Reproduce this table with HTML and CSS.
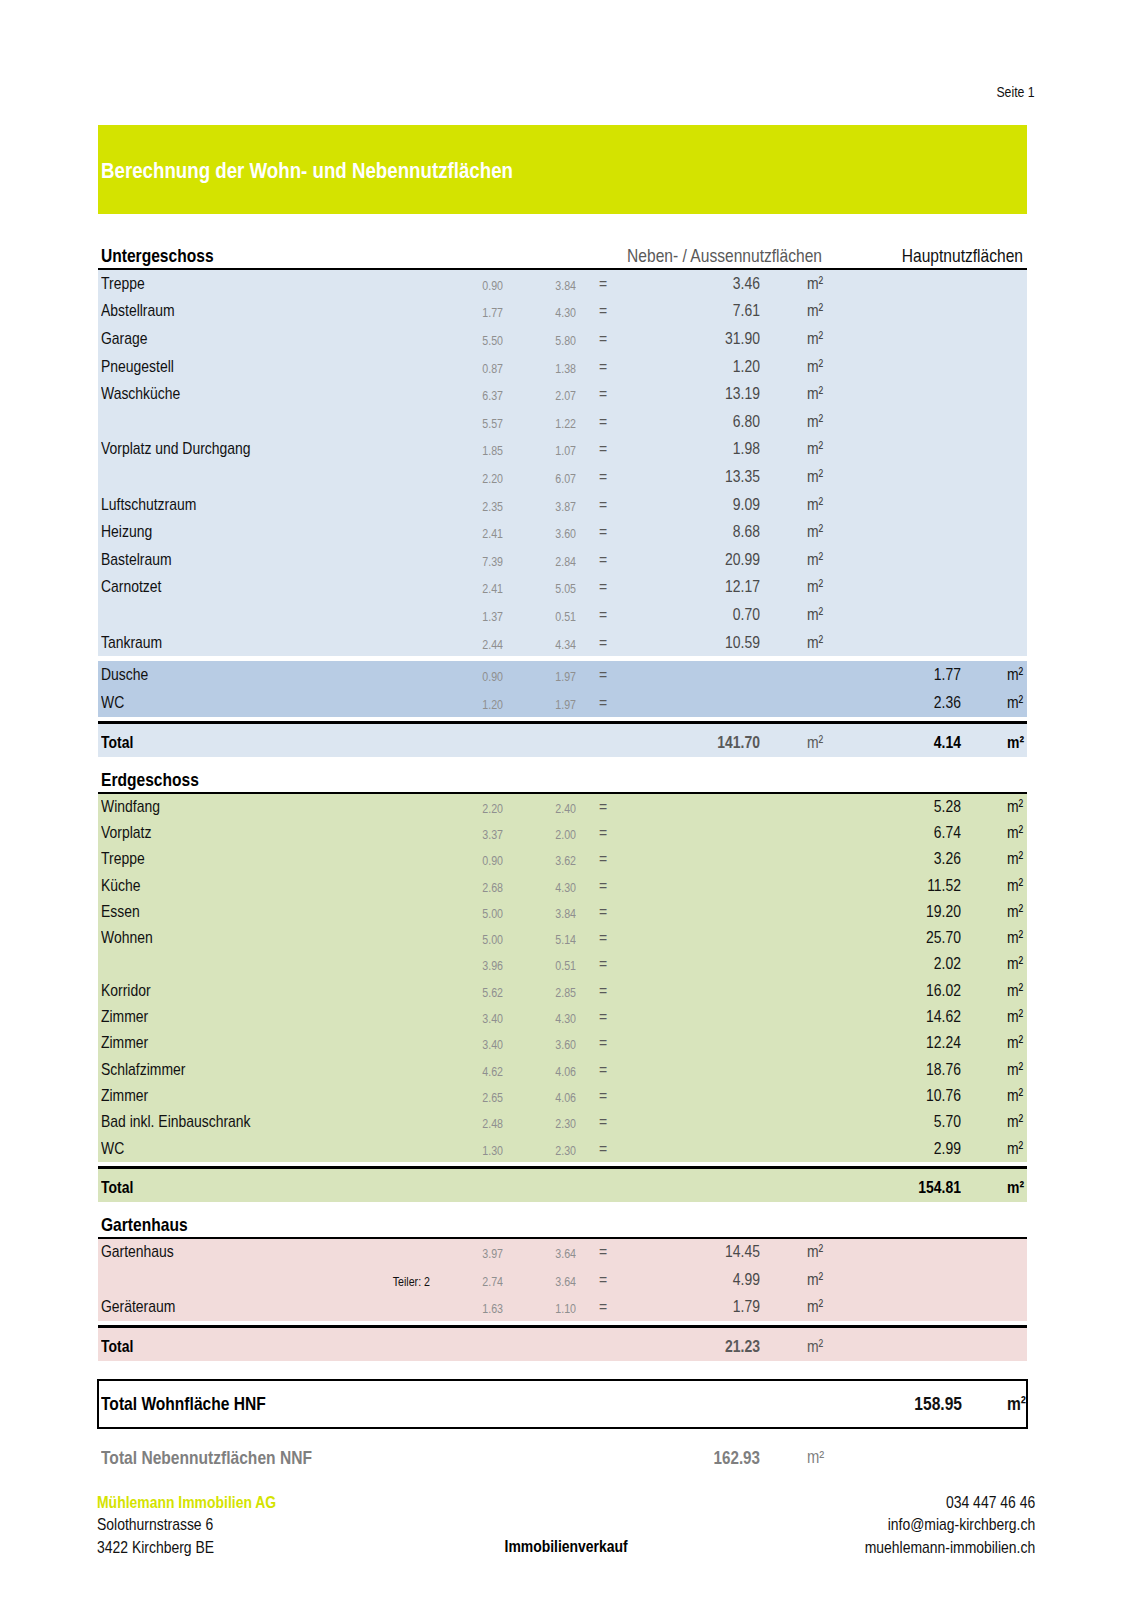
FILE: index.html
```html
<!DOCTYPE html>
<html lang="de">
<head>
<meta charset="utf-8">
<title>Berechnung der Wohn- und Nebennutzflächen</title>
<link rel="stylesheet" href="styles.css">
</head>
<body>
<div class="page">
  <div class="pageno"><span>Seite 1</span></div>

  <div class="banner"><h1>Berechnung der Wohn- und Nebennutzflächen</h1></div>

  <div class="sec-head first">
    <span class="sec-title">Untergeschoss</span>
    <span class="col-neben">Neben- / Aussennutzflächen</span>
    <span class="col-haupt">Hauptnutzflächen</span>
  </div>
  <div class="block blue">
    <div class="row"><span class="lbl">Treppe</span><span class="note"></span><span class="d">0.90</span><span class="d">3.84</span><span class="eq">=</span><span class="v">3.46</span><span class="u">m²</span><span class="v2"></span><span class="u2"></span></div>
    <div class="row"><span class="lbl">Abstellraum</span><span class="note"></span><span class="d">1.77</span><span class="d">4.30</span><span class="eq">=</span><span class="v">7.61</span><span class="u">m²</span><span class="v2"></span><span class="u2"></span></div>
    <div class="row"><span class="lbl">Garage</span><span class="note"></span><span class="d">5.50</span><span class="d">5.80</span><span class="eq">=</span><span class="v">31.90</span><span class="u">m²</span><span class="v2"></span><span class="u2"></span></div>
    <div class="row"><span class="lbl">Pneugestell</span><span class="note"></span><span class="d">0.87</span><span class="d">1.38</span><span class="eq">=</span><span class="v">1.20</span><span class="u">m²</span><span class="v2"></span><span class="u2"></span></div>
    <div class="row"><span class="lbl">Waschküche</span><span class="note"></span><span class="d">6.37</span><span class="d">2.07</span><span class="eq">=</span><span class="v">13.19</span><span class="u">m²</span><span class="v2"></span><span class="u2"></span></div>
    <div class="row"><span class="lbl"></span><span class="note"></span><span class="d">5.57</span><span class="d">1.22</span><span class="eq">=</span><span class="v">6.80</span><span class="u">m²</span><span class="v2"></span><span class="u2"></span></div>
    <div class="row"><span class="lbl">Vorplatz und Durchgang</span><span class="note"></span><span class="d">1.85</span><span class="d">1.07</span><span class="eq">=</span><span class="v">1.98</span><span class="u">m²</span><span class="v2"></span><span class="u2"></span></div>
    <div class="row"><span class="lbl"></span><span class="note"></span><span class="d">2.20</span><span class="d">6.07</span><span class="eq">=</span><span class="v">13.35</span><span class="u">m²</span><span class="v2"></span><span class="u2"></span></div>
    <div class="row"><span class="lbl">Luftschutzraum</span><span class="note"></span><span class="d">2.35</span><span class="d">3.87</span><span class="eq">=</span><span class="v">9.09</span><span class="u">m²</span><span class="v2"></span><span class="u2"></span></div>
    <div class="row"><span class="lbl">Heizung</span><span class="note"></span><span class="d">2.41</span><span class="d">3.60</span><span class="eq">=</span><span class="v">8.68</span><span class="u">m²</span><span class="v2"></span><span class="u2"></span></div>
    <div class="row"><span class="lbl">Bastelraum</span><span class="note"></span><span class="d">7.39</span><span class="d">2.84</span><span class="eq">=</span><span class="v">20.99</span><span class="u">m²</span><span class="v2"></span><span class="u2"></span></div>
    <div class="row"><span class="lbl">Carnotzet</span><span class="note"></span><span class="d">2.41</span><span class="d">5.05</span><span class="eq">=</span><span class="v">12.17</span><span class="u">m²</span><span class="v2"></span><span class="u2"></span></div>
    <div class="row"><span class="lbl"></span><span class="note"></span><span class="d">1.37</span><span class="d">0.51</span><span class="eq">=</span><span class="v">0.70</span><span class="u">m²</span><span class="v2"></span><span class="u2"></span></div>
    <div class="row"><span class="lbl">Tankraum</span><span class="note"></span><span class="d">2.44</span><span class="d">4.34</span><span class="eq">=</span><span class="v">10.59</span><span class="u">m²</span><span class="v2"></span><span class="u2"></span></div>
  </div>
  <div class="block blue-dark">
    <div class="row"><span class="lbl">Dusche</span><span class="note"></span><span class="d">0.90</span><span class="d">1.97</span><span class="eq">=</span><span class="v"></span><span class="u"></span><span class="v2">1.77</span><span class="u2">m²</span></div>
    <div class="row"><span class="lbl">WC</span><span class="note"></span><span class="d">1.20</span><span class="d">1.97</span><span class="eq">=</span><span class="v"></span><span class="u"></span><span class="v2">2.36</span><span class="u2">m²</span></div>
  </div>
  <div class="total blue">
    <span class="lbl">Total</span><span class="note"></span><span class="d"></span><span class="d"></span><span class="eq"></span><span class="v">141.70</span><span class="u">m²</span><span class="v2">4.14</span><span class="u2">m²</span>
  </div>

  <div class="sec-head">
    <span class="sec-title">Erdgeschoss</span>
  </div>
  <div class="block green">
    <div class="row rg"><span class="lbl">Windfang</span><span class="note"></span><span class="d">2.20</span><span class="d">2.40</span><span class="eq">=</span><span class="v"></span><span class="u"></span><span class="v2">5.28</span><span class="u2">m²</span></div>
    <div class="row rg"><span class="lbl">Vorplatz</span><span class="note"></span><span class="d">3.37</span><span class="d">2.00</span><span class="eq">=</span><span class="v"></span><span class="u"></span><span class="v2">6.74</span><span class="u2">m²</span></div>
    <div class="row rg"><span class="lbl">Treppe</span><span class="note"></span><span class="d">0.90</span><span class="d">3.62</span><span class="eq">=</span><span class="v"></span><span class="u"></span><span class="v2">3.26</span><span class="u2">m²</span></div>
    <div class="row rg"><span class="lbl">Küche</span><span class="note"></span><span class="d">2.68</span><span class="d">4.30</span><span class="eq">=</span><span class="v"></span><span class="u"></span><span class="v2">11.52</span><span class="u2">m²</span></div>
    <div class="row rg"><span class="lbl">Essen</span><span class="note"></span><span class="d">5.00</span><span class="d">3.84</span><span class="eq">=</span><span class="v"></span><span class="u"></span><span class="v2">19.20</span><span class="u2">m²</span></div>
    <div class="row rg"><span class="lbl">Wohnen</span><span class="note"></span><span class="d">5.00</span><span class="d">5.14</span><span class="eq">=</span><span class="v"></span><span class="u"></span><span class="v2">25.70</span><span class="u2">m²</span></div>
    <div class="row rg"><span class="lbl"></span><span class="note"></span><span class="d">3.96</span><span class="d">0.51</span><span class="eq">=</span><span class="v"></span><span class="u"></span><span class="v2">2.02</span><span class="u2">m²</span></div>
    <div class="row rg"><span class="lbl">Korridor</span><span class="note"></span><span class="d">5.62</span><span class="d">2.85</span><span class="eq">=</span><span class="v"></span><span class="u"></span><span class="v2">16.02</span><span class="u2">m²</span></div>
    <div class="row rg"><span class="lbl">Zimmer</span><span class="note"></span><span class="d">3.40</span><span class="d">4.30</span><span class="eq">=</span><span class="v"></span><span class="u"></span><span class="v2">14.62</span><span class="u2">m²</span></div>
    <div class="row rg"><span class="lbl">Zimmer</span><span class="note"></span><span class="d">3.40</span><span class="d">3.60</span><span class="eq">=</span><span class="v"></span><span class="u"></span><span class="v2">12.24</span><span class="u2">m²</span></div>
    <div class="row rg"><span class="lbl">Schlafzimmer</span><span class="note"></span><span class="d">4.62</span><span class="d">4.06</span><span class="eq">=</span><span class="v"></span><span class="u"></span><span class="v2">18.76</span><span class="u2">m²</span></div>
    <div class="row rg"><span class="lbl">Zimmer</span><span class="note"></span><span class="d">2.65</span><span class="d">4.06</span><span class="eq">=</span><span class="v"></span><span class="u"></span><span class="v2">10.76</span><span class="u2">m²</span></div>
    <div class="row rg"><span class="lbl">Bad inkl. Einbauschrank</span><span class="note"></span><span class="d">2.48</span><span class="d">2.30</span><span class="eq">=</span><span class="v"></span><span class="u"></span><span class="v2">5.70</span><span class="u2">m²</span></div>
    <div class="row rg"><span class="lbl">WC</span><span class="note"></span><span class="d">1.30</span><span class="d">2.30</span><span class="eq">=</span><span class="v"></span><span class="u"></span><span class="v2">2.99</span><span class="u2">m²</span></div>
  </div>
  <div class="total green">
    <span class="lbl">Total</span><span class="note"></span><span class="d"></span><span class="d"></span><span class="eq"></span><span class="v"></span><span class="u"></span><span class="v2">154.81</span><span class="u2">m²</span>
  </div>

  <div class="sec-head">
    <span class="sec-title">Gartenhaus</span>
  </div>
  <div class="block pink">
    <div class="row"><span class="lbl">Gartenhaus</span><span class="note"></span><span class="d">3.97</span><span class="d">3.64</span><span class="eq">=</span><span class="v">14.45</span><span class="u">m²</span><span class="v2"></span><span class="u2"></span></div>
    <div class="row"><span class="lbl"></span><span class="note">Teiler: 2</span><span class="d">2.74</span><span class="d">3.64</span><span class="eq">=</span><span class="v">4.99</span><span class="u">m²</span><span class="v2"></span><span class="u2"></span></div>
    <div class="row"><span class="lbl">Geräteraum</span><span class="note"></span><span class="d">1.63</span><span class="d">1.10</span><span class="eq">=</span><span class="v">1.79</span><span class="u">m²</span><span class="v2"></span><span class="u2"></span></div>
  </div>
  <div class="total pink">
    <span class="lbl">Total</span><span class="note"></span><span class="d"></span><span class="d"></span><span class="eq"></span><span class="v">21.23</span><span class="u">m²</span><span class="v2"></span><span class="u2"></span>
  </div>

  <div class="hnf">
    <span class="lbl">Total Wohnfläche HNF</span><span class="note"></span><span class="d"></span><span class="d"></span><span class="eq"></span><span class="v"></span><span class="u"></span><span class="v2">158.95</span><span class="u2">m²</span>
  </div>

  <div class="nnf">
    <span class="lbl">Total Nebennutzflächen NNF</span><span class="note"></span><span class="d"></span><span class="d"></span><span class="eq"></span><span class="v">162.93</span><span class="u">m²</span><span class="v2"></span><span class="u2"></span>
  </div>

  <footer class="footer">
    <div class="f-left">
      <div class="company">Mühlemann Immobilien AG</div>
      <div>Solothurnstrasse 6</div>
      <div>3422 Kirchberg BE</div>
    </div>
    <div class="f-mid">Immobilienverkauf</div>
    <div class="f-right">
      <div>034 447 46 46</div>
      <div>info@miag-kirchberg.ch</div>
      <div>muehlemann-immobilien.ch</div>
    </div>
  </footer>
</div>
</body>
</html>
```
FILE: styles.css
```css
html, body {
  margin: 0;
  padding: 0;
  background: #fff;
}
body {
  font-family: "Liberation Sans", Arial, sans-serif;
  color: #111;
}
/* Arial Narrow look: Liberation Sans condensed horizontally */
.pageno span,
.banner h1,
.sec-head > span,
.row > span,
.total > span,
.hnf > span,
.nnf > span,
.footer div div,
.f-mid {
  transform: scaleX(0.82);
  transform-origin: left center;
  white-space: nowrap;
}
.page {
  width: 929px;
  margin-left: 97.5px;
  padding-top: 83px;
}
.pageno {
  text-align: right;
  margin-right: -8px;
  font-size: 15px;
  line-height: 18px;
}
.pageno span {
  display: inline-block;
  transform-origin: right center;
}
.banner {
  margin-top: 24px;
  height: 89px;
  background: #d4e300;
  display: flex;
  align-items: center;
}
.banner h1 {
  margin: 0 0 0 3px;
  color: #fff;
  font-size: 22.8px;
  font-weight: bold;
  padding-top: 2px;
}

.sec-head {
  display: grid;
  grid-template-columns: 1fr 300px 201px 4px;
  align-items: end;
  box-sizing: border-box;
  height: 32px;
  border-bottom: 2px solid #000;
  padding-bottom: 1px;
  margin-top: 5px;
}
.sec-head.first { margin-top: 24px; }
.sec-title {
  margin-left: 3px;
  font-weight: bold;
  font-size: 19px;
  line-height: 22px;
  color: #000;
}
.col-neben, .col-haupt {
  text-align: right;
  font-size: 19px;
  line-height: 22px;
}
.sec-head .col-neben, .sec-head .col-haupt { transform-origin: right center; }
.col-neben { color: #595959; }
.col-haupt { color: #111; }

.row, .total, .hnf, .nnf {
  display: grid;
  grid-template-columns: 232px 100px 73px 73px 82px 102px 128px 73px 66px;
  align-items: center;
}
.row {
  height: 27.6px;
  font-size: 17px;
}
.row.rg { height: 26.3px; }
.pink .row { height: 27.4px; }

.lbl { margin-left: 3px; }
.note {
  text-align: right;
  font-size: 13px;
  padding-top: 3px;
}
.row > .note, .row > .d, .row > .v, .row > .v2,
.total > .v, .total > .v2, .hnf > .v2, .nnf > .v {
  transform-origin: right center;
  text-align: right;
}
.d {
  font-size: 13px;
  color: #8f8f8f;
  padding-top: 3px;
}
.eq {
  margin-left: 23px;
  color: #595959;
}
.u { margin-left: 47px; }
.u2 { margin-left: 46px; }
.v, .u { color: #4a4a4a; }
.v2, .u2 { color: #111; }

.blue { background: #dce6f1; }
.blue-dark { background: #b8cce4; margin-top: 5px; }
.green { background: #d8e4bc; }
.pink { background: #f2dcdb; }

.total {
  margin-top: 4px;
  border-top: 3px solid #000;
  height: 33px;
  font-size: 17px;
  font-weight: bold;
  color: #000;
}
.total > span { padding-top: 6px; }
.total .v { color: #595959; }
.total .u { color: #595959; font-weight: normal; }
.total .v2, .total .u2 { color: #000; }

.hnf {
  margin-top: 18px;
  margin-left: -1px;
  margin-right: -1px;
  height: 50px;
  border: 2px solid #000;
  box-sizing: border-box;
  font-size: 19px;
  color: #000;
}
.hnf .lbl { font-weight: bold; margin-left: 2px; }
.hnf .v2, .hnf .u2 { font-weight: bold; }
.hnf .u2 { margin-left: 45px; }

.nnf {
  margin-top: 14px;
  height: 30px;
  font-size: 19px;
  color: #7f7f7f;
}
.nnf .lbl { font-weight: bold; }
.nnf .v { font-weight: bold; font-size: 18.5px; color: #7f7f7f; }
.nnf .u { font-size: 18px; color: #7f7f7f; }

.footer {
  margin-top: 19px;
  margin-left: -1px;
  margin-right: -8.5px;
  display: grid;
  grid-template-columns: 1fr auto 1fr;
  align-items: end;
  font-size: 17px;
  line-height: 22.5px;
  color: #111;
}
.company {
  color: #d4e300;
  font-weight: bold;
}
.f-mid {
  font-weight: bold;
  font-size: 17px;
  color: #000;
  transform-origin: center center;
  padding-bottom: 1px;
}
.f-right { text-align: right; }
.footer .f-right div { transform-origin: right center; }
```
